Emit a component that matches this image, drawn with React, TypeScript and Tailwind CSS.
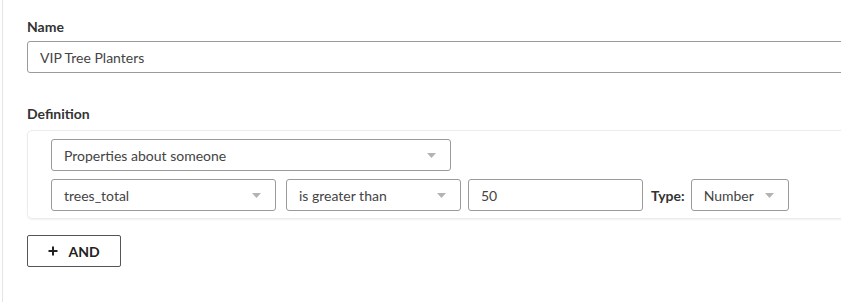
import React from 'react';

const Caret = () => (
    <svg width="9" height="5" viewBox="0 0 9 5" className="shrink-0">
        <path d="M0 0 L9 0 L4.5 5 Z" fill="#b3b3b3" />
    </svg>
);

const Select = ({ value, width }: { value: string; width: string }) => (
    <div className={`${width} h-[32px] border border-[#9a9a9a] rounded-[3px] bg-white flex items-center justify-between pl-[12px] pr-[14px] text-[14px] text-[#444]`}>
        <span>{value}</span>
        <Caret />
    </div>
);

export default function App() {
    return (
        <div className="w-[841px] h-[302px] overflow-hidden bg-white font-['Lato','Liberation_Sans',sans-serif]">
            <div className="ml-[2px] h-full border-l border-[#e4e4e4] pl-[24px] pt-[19px] w-[1000px]">
                <label className="block text-[14px] font-bold text-[#333] leading-[16px]">Name</label>
                <div className="mt-[6px] w-[900px] h-[32px] border border-[#9a9a9a] rounded-[3px] flex items-center pl-[12px] text-[14px] text-[#444]">
                    VIP Tree Planters
                </div>

                <label className="block mt-[33px] text-[14px] font-bold text-[#333] leading-[16px]">Definition</label>
                <div className="mt-[8px] w-[900px] border border-[#ececec] rounded-[5px] shadow-[0_1px_2px_rgba(0,0,0,0.06)] pl-[23px] pt-[8px] pb-[7px] flex flex-col gap-[8px]">
                    <Select value="Properties about someone" width="w-[400px]" />
                    <div className="flex items-center">
                        <Select value="trees_total" width="w-[225px]" />
                        <div className="w-[10px]" />
                        <Select value="is greater than" width="w-[175px]" />
                        <div className="w-[7px]" />
                        <div className="w-[175px] h-[32px] border border-[#9a9a9a] rounded-[3px] flex items-center pl-[12px] text-[14px] text-[#444]">50</div>
                        <span className="ml-[8px] mr-[6px] text-[14px] font-bold text-[#333]">Type:</span>
                        <Select value="Number" width="w-[98px]" />
                    </div>
                </div>

                <button className="mt-[16px] w-[94px] h-[32px] border border-[#555] rounded-[2px] bg-white flex items-center justify-center gap-[10px] text-[14px] font-bold text-[#222]">
                    <svg width="10" height="10" viewBox="0 0 10 10">
                        <path d="M5 0.5 V9.5 M0.5 5 H9.5" stroke="#222" strokeWidth="2" />
                    </svg>
                    <span>AND</span>
                </button>
            </div>
        </div>
    );
}
